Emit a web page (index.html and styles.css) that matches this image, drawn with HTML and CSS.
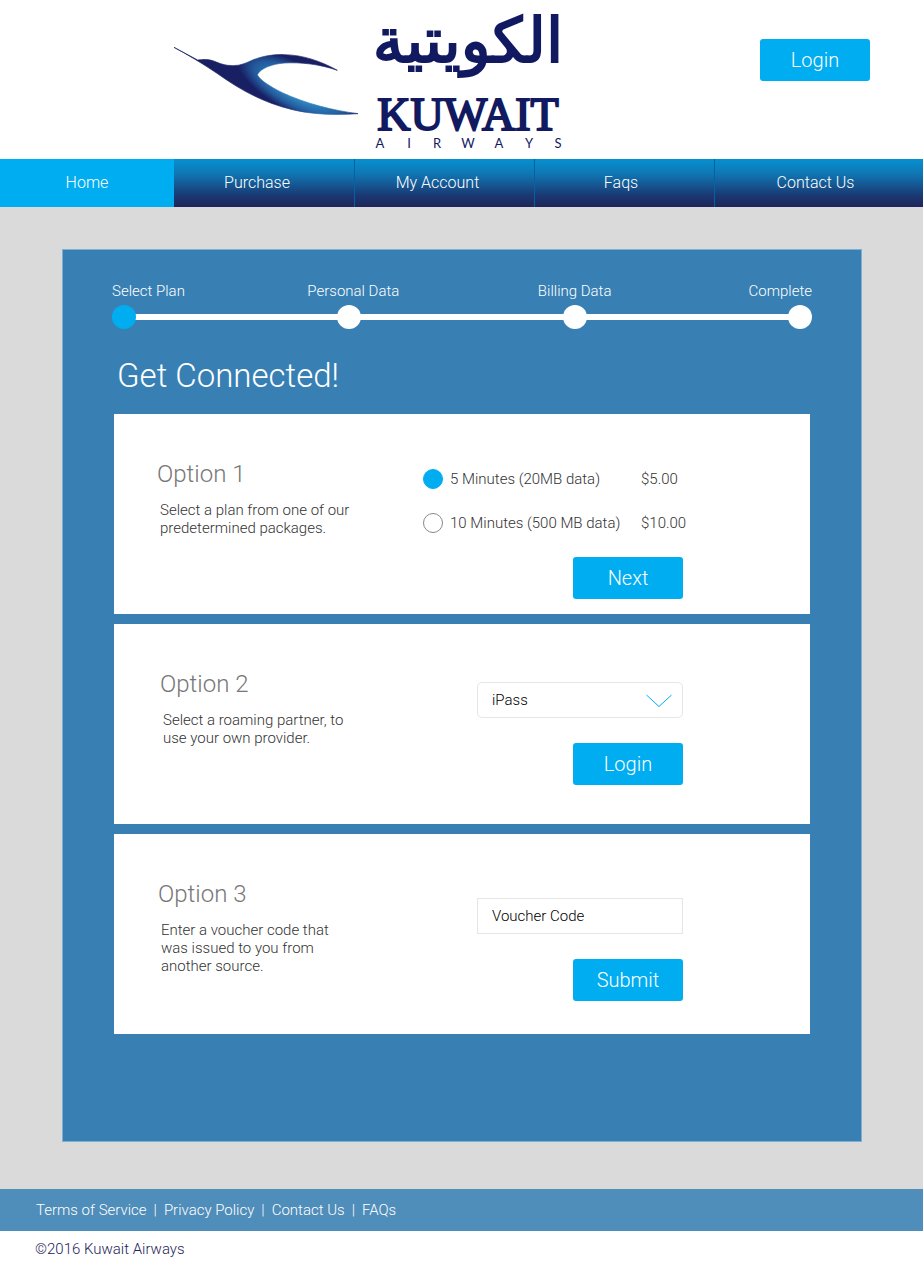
FILE: index.html
```html
<!DOCTYPE html>
<html lang="en">
<head>
<meta charset="utf-8">
<meta name="viewport" content="width=device-width, initial-scale=1">
<title>Kuwait Airways – Get Connected</title>
<link rel="stylesheet" href="styles.css">
</head>
<body>
<header class="header">
  <svg class="logo" viewBox="174 5 388 148" role="img" aria-label="Kuwait Airways">
    <defs>
      <radialGradient id="wing" gradientUnits="userSpaceOnUse" cx="0" cy="0" r="1" gradientTransform="translate(400 268) rotate(28) scale(210 75)">
        <stop offset=".35" stop-color="#2f86c4"/>
        <stop offset=".7" stop-color="#235a9c"/>
        <stop offset=".97" stop-color="#191f63"/>
      </radialGradient>
    </defs>
    <g transform="translate(165 0) scale(.3333)">
      <path fill="url(#wing)" stroke="url(#wing)" stroke-width="2" d="M27 142L98 180C112 178 130 177 146 183C166 191 180 197 204 197C229 197 245 188 263 180C294 168 324 163 358 164C414 165 467 183 517 211C466 193 408 186 358 189C320 192 287 205 277 224C284 240 316 260 352 278C420 310 506 332 579 341C506 346 440 343 382 329C286 306 217 263 156 220C112 190 67 164 27 142Z"/>
    </g>
    <text class="logo-arabic" x="468" y="62" text-anchor="middle" lang="ar">الكويتية</text>
    <text class="logo-name" x="468" y="130" text-anchor="middle">KUWAIT</text>
    <text class="logo-sub" x="380 409 437 468 499 529 558" y="148" text-anchor="middle">AIRWAYS</text>
  </svg>
  <button class="button" type="button">Login</button>
</header>

<nav class="nav" aria-label="Main">
  <a class="nav-link nav-link-active" href="#" aria-current="page">Home</a>
  <a class="nav-link nav-link-first" href="#">Purchase</a>
  <a class="nav-link" href="#">My Account</a>
  <a class="nav-link nav-link-short" href="#">Faqs</a>
  <a class="nav-link nav-link-short" href="#">Contact Us</a>
</nav>

<main class="main">
  <section class="panel">
    <ol class="steps">
      <li class="step step-current" aria-current="step"><span class="step-label">Select Plan</span><span class="step-dot"></span></li>
      <li class="step"><span class="step-label step-label-personal">Personal Data</span><span class="step-dot"></span></li>
      <li class="step"><span class="step-label">Billing Data</span><span class="step-dot"></span></li>
      <li class="step"><span class="step-label">Complete</span><span class="step-dot"></span></li>
    </ol>
    <h1 class="title">Get Connected!</h1>

    <div class="options">
      <section class="option option-plans">
        <div class="option-text">
          <h2 class="option-title">Option 1</h2>
          <p class="option-desc">Select a plan from one of our predetermined packages.</p>
        </div>
        <form class="option-form">
          <label class="plan"><input class="plan-radio" type="radio" name="plan" checked><span>5 Minutes (20MB data)</span><span>$5.00</span></label>
          <label class="plan"><input class="plan-radio" type="radio" name="plan"><span>10 Minutes (500 MB data)</span><span>$10.00</span></label>
          <button class="button" type="button">Next</button>
        </form>
      </section>

      <section class="option option-partner">
        <div class="option-text">
          <h2 class="option-title">Option 2</h2>
          <p class="option-desc">Select a roaming partner, to use your own provider.</p>
        </div>
        <form class="option-form">
          <div class="select-wrap">
            <select class="field field-select" aria-label="Roaming partner"><option>iPass</option></select>
            <svg class="chevron" viewBox="0 0 26 14" aria-hidden="true"><path d="M.5 1L13 12.500L25.500 1" fill="none" stroke="#00adf1"/></svg>
          </div>
          <button class="button" type="button">Login</button>
        </form>
      </section>

      <section class="option option-voucher">
        <div class="option-text">
          <h2 class="option-title">Option 3</h2>
          <p class="option-desc">Enter a voucher code that was issued to you from another source.</p>
        </div>
        <form class="option-form">
          <input class="field" type="text" placeholder="Voucher Code" aria-label="Voucher Code">
          <button class="button" type="button">Submit</button>
        </form>
      </section>
    </div>
  </section>
</main>

<footer>
  <nav class="footer-nav" aria-label="Footer">
    <a class="footer-link" href="#">Terms of Service</a><span>|</span>
    <a class="footer-link" href="#">Privacy Policy</a><span>|</span>
    <a class="footer-link" href="#">Contact Us</a><span>|</span>
    <a class="footer-link" href="#">FAQs</a>
  </nav>
  <p class="copyright">©2016 Kuwait Airways</p>
</footer>
</body>
</html>
```
FILE: styles.css
```css
*, *::before { box-sizing: border-box; }

body {
  margin: 0;
  background: #fff;
  color: #333;
  font-family: Roboto, "Liberation Sans", sans-serif;
  font-weight: 300;
}

h1, h2, p, ol { margin: 0; padding: 0; font-weight: 300; }
a { color: inherit; text-decoration: none; }

.header {
  display: flex;
  justify-content: space-between;
  align-items: flex-start;
  padding: 5px 53px 6px 174px;
}
.header .button { margin-top: 34px; }
.logo { width: 388px; height: 148px; overflow: visible; }
.logo text { fill: #111a60; }
.logo-arabic { font: 62px "DejaVu Sans", sans-serif; stroke: #111a60; stroke-width: 2px; }
.logo-name { font: 46px "Liberation Serif", serif; stroke: #111a60; stroke-width: 2px; }
.logo-sub { font: 13px Lato, sans-serif; }

.button {
  width: 110px;
  height: 42px;
  padding: 0;
  border: 0;
  border-radius: 3px;
  background: #00adf1;
  color: #fff;
  font: 300 20px Roboto, sans-serif;
}

.nav {
  display: grid;
  grid-template-columns: 174fr 180fr 180fr 180fr 209fr;
  background: linear-gradient(#078fcf, #0f77b4 30%, #1a3a74 75%, #1e2459);
  color: #fff;
  font-size: 16px;
  line-height: 48px;
  text-align: center;
}
.nav-link { padding-right: 14px; border-left: 1px solid #0362a5; }
.nav-link-first { border-left: 0; }
.nav-link-short { padding-right: 7px; }
.nav-link-active { padding: 0; border: 0; background: #00adf1; }

.main { padding: 42px 61px 47px 62px; background: #dadada; }
.panel {
  padding: 32px 51px 107px;
  border: 1px solid #7fb0d0;
  background: #3880b4;
}

.steps {
  position: relative;
  display: flex;
  justify-content: space-between;
  margin: 0 -2px;
  list-style: none;
  color: #fff;
  font-size: 15px;
  line-height: 18px;
}
.steps::before {
  content: "";
  position: absolute;
  left: 12px;
  right: 12px;
  bottom: 9px;
  height: 6px;
  background: #fff;
}
.step {
  position: relative;
  display: flex;
  flex-direction: column;
  align-items: center;
  gap: 5px;
  width: 24px;
  white-space: nowrap;
}
.step:first-child { align-items: flex-start; }
.step:last-child { align-items: flex-end; }
.step-label-personal { padding-left: 8px; }
.step-dot { width: 24px; height: 24px; border-radius: 50%; background: #fff; }
.step-current .step-dot { background: #00adf1; }

.title {
  padding: 27px 3px 18px;
  color: #fff;
  font-size: 33px;
  line-height: 40px;
}

.options { display: grid; gap: 10px; }
.option {
  display: flex;
  justify-content: space-between;
  min-height: 200px;
  padding: 0 127px 0 43px;
  background: #fff;
}
.option-partner { padding-left: 46px; }
.option-voucher { padding-left: 44px; }
.option-text { width: 196px; padding-top: 44px; }
.option-title { color: #777; font-size: 24px; line-height: 32px; }
.option-desc { padding: 11px 0 0 3px; font-size: 15px; line-height: 18px; }
.option-voucher .option-text { width: 184px; }

.option-form {
  display: flex;
  flex-direction: column;
  align-items: flex-end;
  gap: 25px;
  width: 206px;
  padding-top: 58px;
}
.option-voucher .option-form { padding-top: 64px; }
.option-plans .option-form { width: 260px; padding-top: 55px; gap: 24px; }

.plan {
  display: grid;
  grid-template-columns: 20px 1fr 42px;
  gap: 7px;
  align-items: center;
  width: 100%;
  font-size: 15px;
  line-height: 20px;
  white-space: nowrap;
}
.plan-radio {
  appearance: none;
  width: 20px;
  height: 20px;
  margin: 0;
  border: 1px solid #888;
  border-radius: 50%;
}
.plan-radio:checked { border-color: #00adf1; background: #00adf1; }

.select-wrap { position: relative; width: 100%; }
.field {
  display: block;
  width: 100%;
  height: 36px;
  padding: 0 14px;
  border: 1px solid #e6e6e6;
  border-radius: 0;
  background: #fff;
  color: #000;
  font: 300 15px Roboto, sans-serif;
}
.field::placeholder { color: #000; opacity: 1; }
.field-select { appearance: none; border-radius: 5px; }
.chevron {
  position: absolute;
  top: 12px;
  right: 11px;
  width: 26px;
  height: 14px;
  pointer-events: none;
}

.footer-nav {
  display: flex;
  gap: 7px;
  padding: 0 36px;
  background: #4f8dba;
  color: #fff;
  font-size: 15px;
  line-height: 42px;
}
.copyright {
  padding: 8px 35px 22px;
  color: #1e2459;
  font-size: 15px;
  line-height: 20px;
}
```
